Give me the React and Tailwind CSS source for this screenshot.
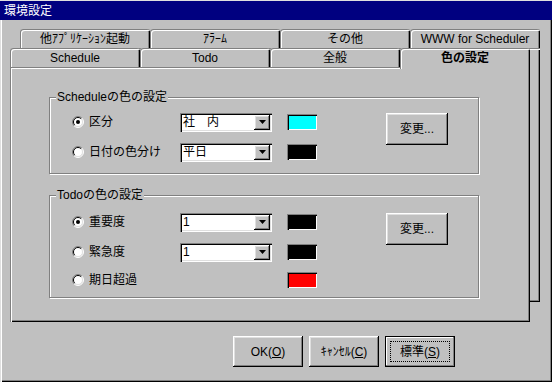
/**
 * 環境設定 dialog - Win95 style property sheet
 */

const raised =
  "shadow-[inset_-1px_-1px_0_#000,inset_1px_1px_0_#fff,inset_-2px_-2px_0_#808080,inset_2px_2px_0_#dfdfdf]";
const sunken =
  "shadow-[inset_1px_1px_0_#808080,inset_2px_2px_0_#000,inset_-1px_-1px_0_#fff,inset_-2px_-2px_0_#dfdfdf]";
const panel =
  "shadow-[inset_1px_1px_0_#808080,inset_2px_2px_0_#fff,inset_-1px_-1px_0_#000,inset_-2px_-2px_0_#808080]";
const tabEdge =
  "shadow-[inset_1px_1px_0_#808080,inset_2px_2px_0_#fff,inset_-1px_0_0_#000,inset_-2px_0_0_#808080]";

function Tab({ label, selected }) {
  if (selected) {
    return (
      <div className={`relative z-10 flex h-[21px] w-[130px] items-center justify-center rounded-t-[3px] bg-[#c0c0c0] pb-[2px] font-bold ${tabEdge}`}>
        {label}
      </div>
    );
  }
  return (
    <div className={`flex h-[19px] w-[130px] items-center justify-center rounded-t-[3px] bg-[#c0c0c0] ${tabEdge}`}>
      {label}
    </div>
  );
}

function Radio({ checked }) {
  return (
    <svg width="12" height="12" viewBox="0 0 12 12" aria-hidden="true">
      <circle cx="6" cy="6" r="5" fill="#fff" />
      <path d="M9.9 2.1 A5.5 5.5 0 0 0 2.1 9.9" stroke="#808080" fill="none" />
      <path d="M2.1 9.9 A5.5 5.5 0 0 0 9.9 2.1" stroke="#fff" fill="none" />
      <path d="M9.2 2.8 A4.5 4.5 0 0 0 2.8 9.2" stroke="#000" fill="none" />
      <path d="M2.8 9.2 A4.5 4.5 0 0 0 9.2 2.8" stroke="#dfdfdf" fill="none" />
      {checked && <circle cx="6" cy="6" r="2" fill="#000" />}
    </svg>
  );
}

function Combo({ value }) {
  return (
    <div className={`flex h-[19px] w-[92px] items-center bg-white pl-[3px] pr-[2px] ${sunken}`}>
      <span className="flex-1 leading-none">{value}</span>
      <div className={`flex h-[15px] w-[16px] items-center justify-center bg-[#c0c0c0] ${raised}`}>
        <svg width="7" height="4" viewBox="0 0 7 4" aria-hidden="true">
          <path d="M0 0h7L3.5 4z" fill="#000" />
        </svg>
      </div>
    </div>
  );
}

function Swatch({ color }) {
  return (
    <div
      className={`ml-[15px] h-[16px] w-[30px] ${color} shadow-[inset_1px_1px_0_#808080,inset_2px_2px_0_#000,inset_-1px_-1px_0_#fff]`}
    />
  );
}

function Row({ label, checked, combo, color, className }) {
  return (
    <div className={`flex h-[20px] items-center ${className}`}>
      <div className="flex w-[108px] items-center gap-[5px]">
        <Radio checked={checked} />
        <span>{label}</span>
      </div>
      {combo ? <Combo value={combo} /> : <div className="w-[92px]" />}
      <Swatch color={color} />
    </div>
  );
}

function Group({ title, className, children }) {
  return (
    <div className={`relative w-[430px] border border-[#808080] shadow-[inset_1px_1px_0_#fff,1px_1px_0_#fff] ${className}`}>
      <span className="absolute left-[6px] top-[-9px] bg-[#c0c0c0] px-[1px] leading-[16px]">{title}</span>
      {children}
    </div>
  );
}

function ChangeButton() {
  return (
    <div className={`ml-[69px] mt-[1px] flex h-[32px] w-[62px] items-center justify-center ${raised}`}>
      変更...
    </div>
  );
}

function Button({ children, isDefault }) {
  if (isDefault) {
    return (
      <div className="relative flex h-[31px] w-[70px] items-center justify-center border border-black shadow-[inset_-1px_-1px_0_#808080,inset_1px_1px_0_#fff]">
        <span className="absolute inset-[4px] border border-dotted border-black" />
        {children}
      </div>
    );
  }
  return (
    <div className={`flex h-[31px] w-[70px] items-center justify-center ${raised}`}>
      {children}
    </div>
  );
}

export default function App() {
  return (
    <div className="h-[382px] w-[552px] overflow-hidden bg-[#c0c0c0] pt-[1px] font-[family-name:Liberation_Sans,Noto_Sans_CJK_JP,sans-serif] text-[12px] text-black shadow-[inset_1px_1px_0_#dfdfdf,inset_2px_2px_0_#fff,inset_-1px_-1px_0_#000,inset_-2px_-2px_0_#808080]">
      <div className="flex h-[19px] items-center bg-[#000080] pl-[4px] text-white">環境設定</div>

      <div className="pl-[10px] pt-[9px]">
        <div className="ml-[10px] flex h-[19px]">
          <Tab label="他ｱﾌﾟﾘｹｰｼｮﾝ起動" />
          <Tab label="ｱﾗｰﾑ" />
          <Tab label="その他" />
          <Tab label="WWW for Scheduler" />
        </div>

        <div className="relative w-[530px]">
          <div className={`absolute left-[10px] top-0 h-[254px] w-[520px] ${panel}`} />
          <div className="relative flex h-[19px] items-start">
            <Tab label="Schedule" />
            <Tab label="Todo" />
            <Tab label="全般" />
            <Tab label="色の設定" selected />
          </div>

          <div className={`relative h-[255px] w-[520px] bg-[#c0c0c0] pl-[39px] pt-[30px] ${panel}`}>
            <Group title="Scheduleの色の設定" className="h-[77px]">
              <div className="flex pl-[22px] pt-[14px]">
                <div>
                  <Row label="区分" checked combo="社　内" color="bg-[#00ffff]" />
                  <Row label="日付の色分け" combo="平日" color="bg-black" className="mt-[10px]" />
                </div>
                <ChangeButton />
              </div>
            </Group>

            <Group title="Todoの色の設定" className="mt-[21px] h-[103px]">
              <div className="flex pl-[22px] pt-[16px]">
                <div>
                  <Row label="重要度" checked combo="1" color="bg-black" />
                  <Row label="緊急度" combo="1" color="bg-black" className="mt-[10px]" />
                  <Row label="期日超過" color="bg-[#ff0000]" className="mt-[8px]" />
                </div>
                <ChangeButton />
              </div>
            </Group>
          </div>
        </div>

        <div className="ml-[223px] mt-[14px] flex gap-[6px]">
          <Button>
            OK(<u>O</u>)
          </Button>
          <Button>
            ｷｬﾝｾﾙ(<u>C</u>)
          </Button>
          <Button isDefault>
            標準(<u>S</u>)
          </Button>
        </div>
      </div>
    </div>
  );
}
